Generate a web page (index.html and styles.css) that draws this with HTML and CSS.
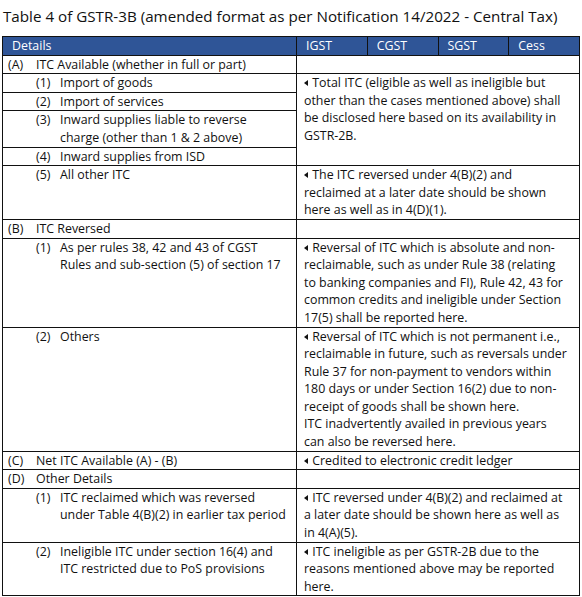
FILE: index.html
```html
<!DOCTYPE html>
<html>
<head>
<meta charset="utf-8">
<link rel="stylesheet" href="styles.css">
</head>
<body>
<div class="title">Table 4 of GSTR-3B (amended format as per Notification 14/2022 - Central Tax)</div>
<table class="gst">
  <colgroup>
    <col class="c-details"><col class="c-tax"><col class="c-tax"><col class="c-tax"><col class="c-tax">
  </colgroup>
  <thead>
    <tr class="head">
      <th>Details</th><th>IGST</th><th>CGST</th><th>SGST</th><th>Cess</th>
    </tr>
  </thead>
  <tbody>
    <tr>
      <td><div class="item"><span class="lbl">(A)</span><span>ITC Available (whether in full or part)</span></div></td>
      <td colspan="4"></td>
    </tr>
    <tr>
      <td><div class="item sub"><span class="lbl">(1)</span><span>Import of goods</span></div></td>
      <td colspan="4" rowspan="4" class="note"><span class="tri"></span> Total ITC (eligible as well as ineligible but<br>other than the cases mentioned above) shall<br>be disclosed here based on its availability in<br>GSTR-2B.</td>
    </tr>
    <tr>
      <td><div class="item sub"><span class="lbl">(2)</span><span>Import of services</span></div></td>
    </tr>
    <tr>
      <td><div class="item sub"><span class="lbl">(3)</span><span>Inward supplies liable to reverse<br>charge (other than 1 &amp; 2 above)</span></div></td>
    </tr>
    <tr>
      <td><div class="item sub"><span class="lbl">(4)</span><span>Inward supplies from ISD</span></div></td>
    </tr>
    <tr>
      <td><div class="item sub"><span class="lbl">(5)</span><span>All other ITC</span></div></td>
      <td colspan="4" class="note"><span class="tri"></span> The ITC reversed under 4(B)(2) and<br>reclaimed at a later date should be shown<br>here as well as in 4(D)(1).</td>
    </tr>
    <tr>
      <td><div class="item"><span class="lbl">(B)</span><span>ITC Reversed</span></div></td>
      <td colspan="4"></td>
    </tr>
    <tr>
      <td><div class="item sub"><span class="lbl">(1)</span><span>As per rules 38, 42 and 43 of CGST<br>Rules and sub-section (5) of section 17</span></div></td>
      <td colspan="4" class="note"><span class="tri"></span> Reversal of ITC which is absolute and non-<br>reclaimable, such as under Rule 38 (relating<br>to banking companies and FI), Rule 42, 43 for<br>common credits and ineligible under Section<br>17(5) shall be reported here.</td>
    </tr>
    <tr>
      <td><div class="item sub"><span class="lbl">(2)</span><span>Others</span></div></td>
      <td colspan="4" class="note"><span class="tri"></span> Reversal of ITC which is not permanent i.e.,<br>reclaimable in future, such as reversals under<br>Rule 37 for non-payment to vendors within<br>180 days or under Section 16(2) due to non-<br>receipt of goods shall be shown here.<br>ITC inadvertently availed in previous years<br>can also be reversed here.</td>
    </tr>
    <tr>
      <td><div class="item"><span class="lbl">(C)</span><span>Net ITC Available (A) - (B)</span></div></td>
      <td colspan="4" class="note"><span class="tri"></span> Credited to electronic credit ledger</td>
    </tr>
    <tr>
      <td><div class="item"><span class="lbl">(D)</span><span>Other Details</span></div></td>
      <td colspan="4"></td>
    </tr>
    <tr>
      <td><div class="item sub"><span class="lbl">(1)</span><span>ITC reclaimed which was reversed<br>under Table 4(B)(2) in earlier tax period</span></div></td>
      <td colspan="4" class="note"><span class="tri"></span> ITC reversed under 4(B)(2) and reclaimed at<br>a later date should be shown here as well as<br>in 4(A)(5).</td>
    </tr>
    <tr>
      <td><div class="item sub"><span class="lbl">(2)</span><span>Ineligible ITC under section 16(4) and<br>ITC restricted due to PoS provisions</span></div></td>
      <td colspan="4" class="note"><span class="tri"></span> ITC ineligible as per GSTR-2B due to the<br>reasons mentioned above may be reported<br>here.</td>
    </tr>
  </tbody>
</table>
</body>
</html>
```

FILE: styles.css
```css
html, body {
  margin: 0;
  padding: 0;
  background: #fff;
}
body {
  font-family: "Open Sans", "Noto Sans", sans-serif;
  font-size: 12.4px;
  color: #111;
}
.title {
  height: 36px;
  box-sizing: border-box;
  padding: 6px 0 0 3px;
  font-size: 15.2px;
  line-height: 20px;
  white-space: nowrap;
}
.gst {
  margin-left: 2px;
  width: 577px;
  border-collapse: collapse;
  table-layout: fixed;
}
.c-details { width: 294px; }
.c-tax { width: 70.75px; }
.gst th, .gst td {
  border: 1px solid #111;
  padding: 0;
  line-height: 17.6px;
  vertical-align: top;
  text-align: left;
  white-space: nowrap;
}
.head th {
  background: #2f5597;
  color: #fff;
  font-weight: normal;
  padding-left: 9px;
  height: 17px;
}
.item {
  display: flex;
  padding-left: 5px;
}
.item .lbl {
  width: 28px;
  flex: none;
}
.item.sub {
  padding-left: 33px;
}
.item.sub .lbl {
  width: 24px;
}
.note {
  padding-left: 7px !important;
}
.tri {
  display: inline-block;
  width: 0;
  height: 0;
  border-top: 3.5px solid transparent;
  border-bottom: 3.5px solid transparent;
  border-right: 4px solid #111;
  vertical-align: 1px;
  margin-right: 1px;
}
```
